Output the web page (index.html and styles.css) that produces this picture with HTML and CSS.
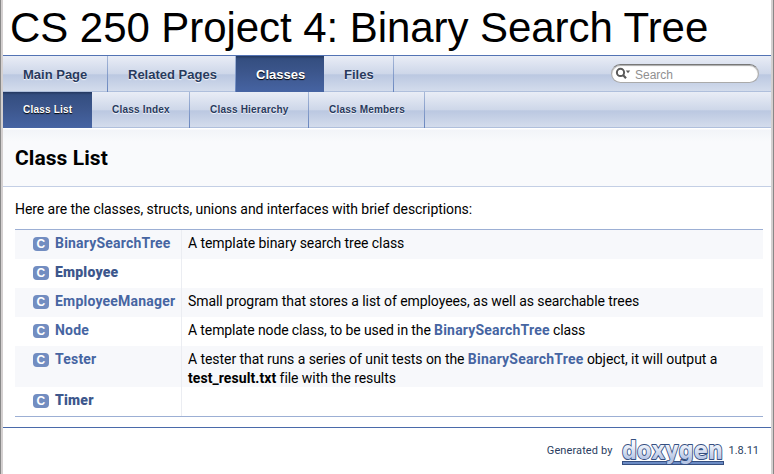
FILE: index.html
```html
<!DOCTYPE html>
<html lang="en">
<head>
<meta charset="utf-8">
<title>CS 250 Project 4: Binary Search Tree</title>
<link rel="stylesheet" href="styles.css">
</head>
<body>
<div class="page">
  <div class="project">CS 250 Project 4: Binary Search Tree</div>
  <nav class="tabs main-tabs">
    <a class="tab w105">Main Page</a><a class="tab w128">Related Pages</a><a class="tab current w88">Classes</a><a class="tab w70">Files</a>
    <div class="search">
      <svg width="18" height="14" viewBox="0 0 18 14"><circle cx="5.5" cy="5.4" r="3.6" fill="none" stroke="#5a5a5a" stroke-width="2"/><path d="M8 8l3 3.2" stroke="#5a5a5a" stroke-width="2.2"/><path d="M10.8 3.6h4.4l-2.2 2.6z" fill="#5a5a5a"/></svg>
      <span>Search</span>
    </div>
  </nav>
  <nav class="tabs sub-tabs">
    <a class="tab current w89">Class List</a><a class="tab w98">Class Index</a><a class="tab w119">Class Hierarchy</a><a class="tab w116">Class Members</a>
  </nav>
  <header class="header"><h1>Class List</h1></header>
  <main class="contents">
    <p>Here are the classes, structs, unions and interfaces with brief descriptions:</p>
    <div class="directory">
      <div class="row"><div class="entry"><span class="icon">C</span><a>BinarySearchTree</a></div><div class="desc">A template binary search tree class</div></div>
      <div class="row"><div class="entry"><span class="icon">C</span><b>Employee</b></div><div class="desc"></div></div>
      <div class="row"><div class="entry"><span class="icon">C</span><a>EmployeeManager</a></div><div class="desc">Small program that stores a list of employees, as well as searchable trees</div></div>
      <div class="row"><div class="entry"><span class="icon">C</span><a>Node</a></div><div class="desc desc-node">A template node class, to be used in the <a>BinarySearchTree</a> class</div></div>
      <div class="row tall"><div class="entry"><span class="icon">C</span><a>Tester</a></div><div class="desc">A tester that runs a series of unit tests on the <a>BinarySearchTree</a> object, it will output a <strong>test_result.txt</strong> file with the results</div></div>
      <div class="row"><div class="entry"><span class="icon">C</span><b>Timer</b></div><div class="desc"></div></div>
    </div>
  </main>
  <footer class="footer">
    <span>Generated by</span>
    <svg class="logo" width="104" height="36" viewBox="0 -4 104 36">
      <defs><linearGradient id="g" x1="0" y1="0" x2="0" y2="1"><stop offset="0.3" stop-color="#f4f7fc"/><stop offset="0.8" stop-color="#b7c6e5"/></linearGradient></defs>
      <rect x="1.5" y="22.5" width="101" height="3" fill="#6b8bc4" stroke="#364f80"/>
      <text class="logo-text" x="1" y="19.5" textLength="101" lengthAdjust="spacingAndGlyphs">doxygen</text>
    </svg>
    <span>1.8.11</span>
  </footer>
</div>
</body>
</html>
```
FILE: styles.css
```css
* { box-sizing: border-box; }
body {
  margin: 0;
  background: #fff;
  color: #000;
  font: 14px/19px Roboto, sans-serif;
  letter-spacing: -0.065px;
  overflow: hidden;
}
.page {
  height: 474px;
  border: solid #d4d0d0;
  border-width: 0 2px;
  margin: 0 1px;
  box-shadow: 0 0 0 1px #888;
}
.project {
  height: 55px;
  padding-left: 7px;
  font: 42px/55px "Liberation Sans", Arial, sans-serif;
  letter-spacing: -0.06px;
  white-space: nowrap;
}
.tabs {
  display: flex;
  height: 36px;
  border-bottom: 1px solid #afbfdc;
  background: linear-gradient(#e9edf6 0, #ced7e9 50%, #bbc8e1 54%, #d3dcec 100%);
  font-family: "Liberation Sans", Arial, sans-serif;
  font-weight: bold;
}
.main-tabs { height: 37px; border-top: 1px solid #5373b4; font-size: 13px; letter-spacing: 0; }
.sub-tabs { font-size: 10px; letter-spacing: 0.2px; }
.tab {
  height: 36px;
  padding-left: 20px;
  line-height: 37px;
  color: #283a5d;
  white-space: nowrap;
  text-shadow: 0 1px 1px rgba(255, 255, 255, .9);
  border-right: 1px solid;
  border-image: linear-gradient(#a9bad9, #6583bd) 1;
}
.sub-tabs .tab { line-height: 35px; }
.tab.current {
  color: #fff;
  background: linear-gradient(#24385f 0, #344e80 8%, #3c568c 45%, #4664a3 100%);
  text-shadow: 0 1px 1px #000;
  border: 0;
}
.w105 { width: 105px; }
.w128 { width: 128px; }
.w88 { width: 88px; }
.w70 { width: 70px; }
.w89 { width: 89px; }
.w98 { width: 98px; }
.w119 { width: 119px; }
.w116 { width: 116px; }
.search {
  display: flex;
  width: 148px;
  height: 19px;
  margin: 8px 12px 0 auto;
  padding: 2px 0 0 3px;
  border: 1px solid #aaa;
  border-top: 1px solid #777;
  border-radius: 10px;
  background: #fff;
  box-shadow: inset 0 1px 1px #aaa;
  color: #909090;
  font: 12px/16px "Liberation Sans", Arial, sans-serif;
  letter-spacing: 0;
}
.search span { margin-left: 2px; }
.header {
  height: 59px;
  padding: 18px 12px 0;
  background: linear-gradient(#fff 0 1px, #f2f4f8 2px, #f9fafc 14px);
  border-bottom: 1px solid #c4cfe5;
}
h1 { margin: 0; font-size: 21px; line-height: 24px; letter-spacing: 0.07px; }
.contents { height: 240px; padding: 13px 8px 0 12px; }
p { margin: 0 0 10px; }
.directory { border: solid #9cafd4; border-width: 1px 0; }
.row { display: flex; height: 29px; }
.row:nth-child(odd) { background: #f7f8fb; }
.row.tall { height: 41px; }
.entry {
  display: flex;
  width: 167px;
  padding: 4px 0 0 18px;
  border-right: 1px solid #ebedf2;
  font-weight: bold;
  letter-spacing: 0.2px;
}
.icon {
  width: 16px;
  height: 14px;
  margin: 3px 6px 0 0;
  border-radius: 4px;
  background: #728dc1;
  color: #fff;
  font: bold 12px/14px "Liberation Sans", Arial, sans-serif;
  text-align: center;
}
.desc { flex: 1; padding: 4px 6px 0; }
.desc-node { letter-spacing: -0.12px; }
.contents a { color: #4665a2; font-weight: bold; letter-spacing: 0.2px; }
strong { letter-spacing: 0.07px; }
b { color: #3d578c; }
.footer {
  display: flex;
  height: 47px;
  padding: 7px 12px 0 0;
  border-top: 1px solid #4a6aaa;
  justify-content: flex-end;
  color: #2a3d61;
  font-size: 11px;
  line-height: 31px;
  letter-spacing: 0.1px;
}
.logo { margin: 0 3px 0 9px; overflow: visible; }
.footer span:last-child { letter-spacing: 0; }
.logo-text {
  font: bold 25px "DejaVu Sans", sans-serif;
  letter-spacing: 0;
  fill: url(#g);
  stroke: #364f80;
  stroke-width: 2px;
  stroke-linejoin: round;
  paint-order: stroke;
}
```
